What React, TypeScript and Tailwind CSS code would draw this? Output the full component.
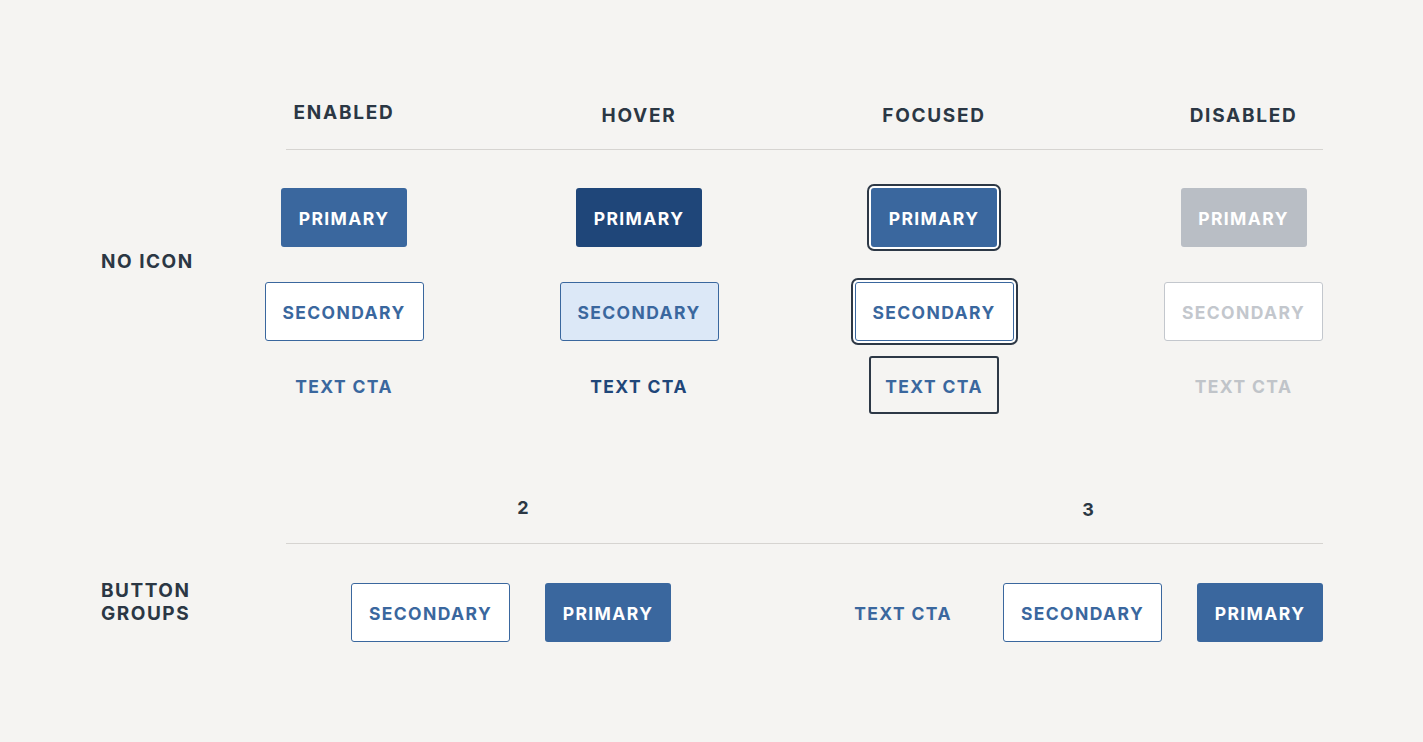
import React from 'react';

const font = { fontFamily: 'Inter, "Noto Sans", sans-serif' };

function Primary({ state = 'enabled' }: { state?: 'enabled' | 'hover' | 'focused' | 'disabled' }) {
    const bg =
        state === 'hover' ? 'bg-[#1f4679]' : state === 'disabled' ? 'bg-[#b9bec5]' : 'bg-[#3a679e]';
    const ring = state === 'focused' ? 'shadow-[0_0_0_2px_#ffffff,0_0_0_4px_#2d3846]' : '';
    return (
        <div className={`w-[126px] h-[59px] pt-[4px] rounded-[3px] flex items-center justify-center text-white text-[17.5px] font-bold tracking-[0.08em] ${bg} ${ring}`}>
            PRIMARY
        </div>
    );
}

function Secondary({ state = 'enabled' }: { state?: 'enabled' | 'hover' | 'focused' | 'disabled' }) {
    const look =
        state === 'hover'
            ? 'bg-[#dce8f7] border-[#3a679e] text-[#3a679e]'
            : state === 'disabled'
            ? 'bg-white border-[#c3c7cd] text-[#c3c7cd]'
            : 'bg-white border-[#3a679e] text-[#3a679e]';
    const ring = state === 'focused' ? 'shadow-[0_0_0_2px_#ffffff,0_0_0_4px_#2d3846]' : '';
    return (
        <div className={`w-[159px] h-[59px] pt-[4px] rounded-[3px] border flex items-center justify-center text-[17.5px] font-bold tracking-[0.08em] ${look} ${ring}`}>
            SECONDARY
        </div>
    );
}

function TextCta({ state = 'enabled' }: { state?: 'enabled' | 'hover' | 'focused' | 'disabled' }) {
    const color =
        state === 'hover' ? 'text-[#1f4679]' : state === 'disabled' ? 'text-[#c0c4c9]' : 'text-[#3a679e]';
    const box = state === 'focused' ? 'border-2 border-[#2d3846] rounded-[3px]' : '';
    return (
        <div className={`w-[130px] h-[58px] pt-[4px] flex items-center justify-center text-[17.5px] font-bold tracking-[0.08em] ${color} ${box}`}>
            TEXT CTA
        </div>
    );
}

const states = ['enabled', 'hover', 'focused', 'disabled'] as const;

export default function App() {
    return (
        <div className="w-full h-[742px] bg-[#f5f4f2] text-[#2b3744] pt-[99px]" style={font}>
            {/* column headers */}
            <div className="pl-[196px] grid grid-cols-[296px_294px_296px_323px] h-[24px]">
                {['ENABLED', 'HOVER', 'FOCUSED', 'DISABLED'].map((h, i) => (
                    <div key={h} className={`flex justify-center items-center text-[19px] font-bold tracking-[0.09em] ${i === 0 ? 'pb-[5px]' : ''}`}>
                        {h}
                    </div>
                ))}
            </div>
            <div className="ml-[286px] w-[1037px] h-px bg-[#d6d4d1] mt-[26px]" />

            {/* no icon rows */}
            <div className="flex mt-[38px]">
                <div className="w-[196px] pl-[101px] pt-[62px] text-[19px] font-bold tracking-[0.08em] leading-[24px]">
                    NO ICON
                </div>
                <div className="grid grid-cols-[296px_294px_296px_323px]">
                    {states.map((s) => (
                        <div key={s} className="flex flex-col items-center">
                            <Primary state={s} />
                            <div className="mt-[35px]">
                                <Secondary state={s} />
                            </div>
                            <div className="mt-[15px]">
                                <TextCta state={s} />
                            </div>
                        </div>
                    ))}
                </div>
            </div>

            {/* group headers */}
            <div className="flex pl-[286px] mt-[81px] h-[24px] text-[18px] font-bold">
                <div className="w-[474px] flex justify-center items-center">2</div>
                <div className="w-[656px] flex justify-center items-center pt-[5px]">3</div>
            </div>
            <div className="ml-[286px] w-[1037px] h-px bg-[#d6d4d1] mt-[24px]" />

            {/* button groups */}
            <div className="flex mt-[30px]">
                <div className="w-[286px] pl-[101px] pt-[5px] text-[19px] font-bold tracking-[0.08em] leading-[23px]">
                    BUTTON
                    <br />
                    GROUPS
                </div>
                <div className="flex pt-[9px]">
                    <div className="ml-[65px] flex gap-[35px]">
                        <Secondary />
                        <Primary />
                    </div>
                    <div className="ml-[167px] flex gap-[35px]">
                        <TextCta />
                        <Secondary />
                        <Primary />
                    </div>
                </div>
            </div>
        </div>
    );
}
